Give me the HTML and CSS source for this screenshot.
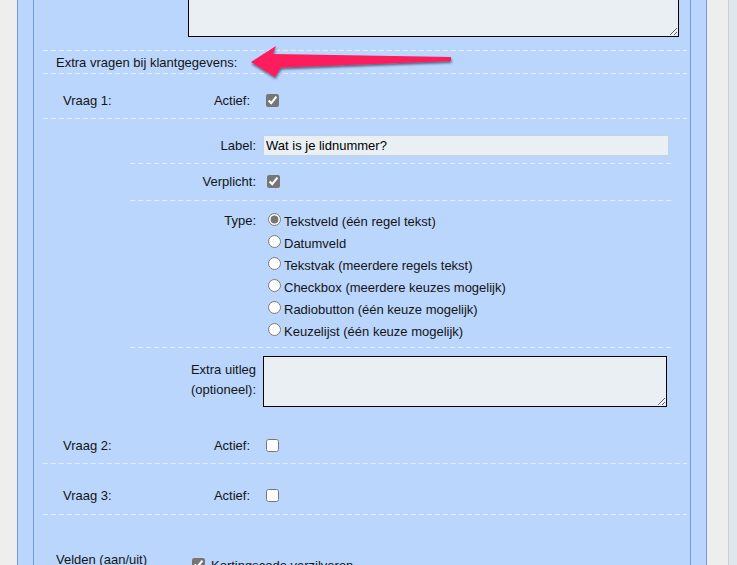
FILE: index.html
```html
<!DOCTYPE html>
<html lang="nl">
<head>
<meta charset="utf-8">
<title>Klantgegevens</title>
<link rel="stylesheet" href="styles.css">
</head>
<body>
<div class="page">
  <div class="outer">
    <div class="inner">
      <div class="form">
        <div class="row top-row"><textarea class="ta-top"></textarea></div>

        <div class="row heading">
          Extra vragen bij klantgegevens:
          <svg class="arrow" width="214" height="44" viewBox="0 0 214 44" aria-hidden="true">
            <defs>
              <filter id="sh" x="-10%" y="-40%" width="120%" height="200%">
                <feDropShadow dx="0.5" dy="2" stdDeviation="1.2" flood-color="#1e2b45" flood-opacity="0.65"/>
              </filter>
            </defs>
            <path d="M3 19 L28 3 L25 11 L203 14 L203 18 L33 24.5 L27 34 Z" fill="#fd1a5c" filter="url(#sh)"/>
          </svg>
        </div>

        <div class="row q q1">
          <span class="q-name">Vraag 1:</span>
          <span class="q-label">Actief:</span>
          <input type="checkbox" checked>
        </div>

        <div class="sub">
          <div class="sub-row r-label">
            <span class="s-label">Label:</span>
            <input class="text" type="text" value="Wat is je lidnummer?">
          </div>
          <div class="sub-row r-req">
            <span class="s-label">Verplicht:</span>
            <input type="checkbox" checked>
          </div>
          <div class="sub-row r-type">
            <span class="s-label type-label">Type:</span>
            <div class="options">
              <div class="opt"><label><input type="radio" name="t1" checked>Tekstveld (één regel tekst)</label></div>
              <div class="opt"><label><input type="radio" name="t1">Datumveld</label></div>
              <div class="opt"><label><input type="radio" name="t1">Tekstvak (meerdere regels tekst)</label></div>
              <div class="opt"><label><input type="radio" name="t1">Checkbox (meerdere keuzes mogelijk)</label></div>
              <div class="opt"><label><input type="radio" name="t1">Radiobutton (één keuze mogelijk)</label></div>
              <div class="opt"><label><input type="radio" name="t1">Keuzelijst (één keuze mogelijk)</label></div>
            </div>
          </div>
          <div class="sub-row r-extra">
            <span class="s-label extra-label">Extra uitleg<br>(optioneel):</span>
            <textarea class="ta-extra"></textarea>
          </div>
        </div>

        <div class="row q q2">
          <span class="q-name">Vraag 2:</span>
          <span class="q-label">Actief:</span>
          <input type="checkbox">
        </div>

        <div class="row q q3">
          <span class="q-name">Vraag 3:</span>
          <span class="q-label">Actief:</span>
          <input type="checkbox">
        </div>

        <div class="row velden">
          <span class="v-name">Velden (aan/uit)</span>
          <div class="v-list">
            <label class="v-item"><input type="checkbox" checked><span class="v-text">Kortingscode verzilveren</span></label>
          </div>
        </div>
      </div>
    </div>
  </div>
  <div class="aside"></div>
</div>
</body>
</html>
```

FILE: styles.css
```css
html, body {
  margin: 0;
  height: 100%;
  overflow: hidden;
}

body {
  background: #eeeeee;
  font: 13px/15px "Liberation Sans", Arial, sans-serif;
  color: #141414;
}

.page {
  display: flex;
  height: 100%;
}

.outer {
  margin-left: 17px;
  width: 690px;
  height: 100%;
  box-sizing: border-box;
  border-left: 1px solid #7199dc;
  border-right: 1px solid #7199dc;
  background: #bad6fd;
  padding: 0 15px;
}

.inner {
  height: 100%;
  box-sizing: border-box;
  border-left: 1px solid #7199dc;
  border-right: 1px solid #7199dc;
  padding: 0 3px 0 9px;
}

.aside {
  margin-left: auto;
  width: 9px;
  box-sizing: border-box;
  border-left: 1px solid #c8d2e2;
  background: #e1e5ec;
}

.form {
  display: flow-root;
  --dash: repeating-linear-gradient(90deg, #e6eefb 0 5px, transparent 5px 8px);
}

input[type="checkbox"],
input[type="radio"] {
  accent-color: #767676;
}

/* dashed separators */
.heading,
.q1,
.q2,
.q3,
.r-label,
.r-req,
.r-type {
  background: var(--dash) left bottom / 100% 1px no-repeat;
}

.heading {
  background:
    var(--dash) left top / 100% 1px no-repeat,
    var(--dash) left bottom / 100% 1px no-repeat;
}

/* top textarea (scrolled off) */
.top-row {
  padding: 0 0 13px 145px;
}

.ta-top {
  display: block;
  margin: -45px 0 0;
  width: 491px;
  height: 82px;
  box-sizing: border-box;
  border: 1px solid #000;
  background: #eaeff4;
  font: 13px "Liberation Sans", Arial, sans-serif;
}

/* heading */
.heading {
  position: relative;
  padding: 5px 0 4px 13px;
}

.arrow {
  position: absolute;
  left: 205px;
  top: -7px;
  overflow: visible;
}

/* question rows */
.q {
  display: flex;
  align-items: center;
  padding-left: 20px;
}

.q1 { padding-top: 17px; padding-bottom: 9px; }
.q2 { padding-top: 22px; padding-bottom: 9px; }
.q3 { padding-top: 22px; padding-bottom: 10px; }

.q-name {
  width: 120px;
}

.q-label {
  width: 67px;
  text-align: right;
  margin-right: 12px;
}

/* nested block */
.sub {
  margin: 0 13px 0 87px;
}

.sub-row {
  display: flex;
  align-items: center;
}

.s-label {
  width: 133px;
  box-sizing: border-box;
  padding-right: 7px;
  text-align: right;
  flex: none;
}

.r-label { padding: 16px 0 8px; }
.r-req { padding: 8px 0 10px; }

.r-type {
  align-items: flex-start;
  padding: 9px 0 6px;
}

.type-label {
  line-height: 22px;
}

.opt {
  height: 22px;
  line-height: 22px;
  white-space: nowrap;
}

.r-extra {
  align-items: flex-start;
  padding: 8px 0 7px;
}

.extra-label {
  line-height: 20px;
  padding-top: 4px;
}

.text {
  width: 406px;
  height: 21px;
  box-sizing: border-box;
  margin: 0;
  padding: 1px 2px;
  border: 1px solid #c3d2e8;
  background: #eaeff4;
  color: #000;
  font: 13px "Liberation Sans", Arial, sans-serif;
  outline: none;
}

.ta-extra {
  display: block;
  width: 404px;
  height: 51px;
  box-sizing: border-box;
  margin: 0;
  border: 1px solid #000;
  background: #eaeff4;
  font: 13px "Liberation Sans", Arial, sans-serif;
}

/* velden */
.velden {
  display: flex;
  align-items: flex-start;
  padding: 37px 0 0 13px;
}

.v-name {
  width: 132px;
  flex: none;
}

.v-item {
  display: flex;
  align-items: center;
  margin-top: 3px;
}

.v-text {
  padding-left: 3px;
  padding-top: 2px;
}
```
